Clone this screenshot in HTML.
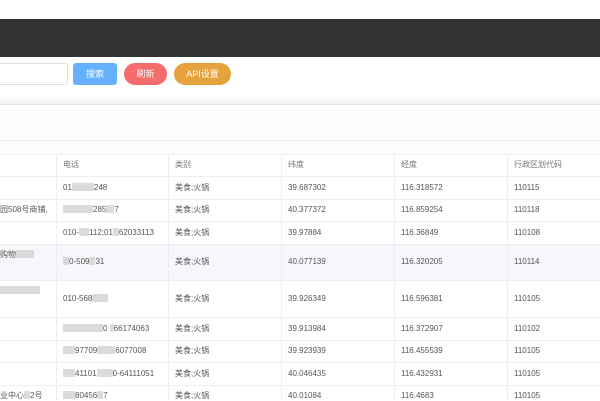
<!DOCTYPE html><html><head><meta charset="utf-8"><style>
body{margin:0;width:600px;height:400px;overflow:hidden;background:#fff;font-family:"Liberation Sans","Noto Sans CJK SC",sans-serif;position:relative}
.a{position:absolute}
.btn{position:absolute;top:63px;height:22px;color:#fff;font-size:9px;line-height:22px;text-align:center}
.t{position:absolute;font-size:8px;line-height:10px;height:10px;color:#555;white-space:nowrap}
.h{color:#777}
.b{display:inline-block;background:#ccc;height:8px;vertical-align:-1px;opacity:.7}
</style></head><body>
<div class="a" style="top:19px;left:0;width:600px;height:38px;background:#323335"></div>
<div class="a" style="top:63px;left:-5px;width:71px;height:20px;border:1px solid #dcdfe6;border-radius:3px"></div>
<div class="btn" style="left:73px;width:44px;background:#66b1ff;border-radius:3px">搜索</div>
<div class="btn" style="left:124px;width:43px;background:#f56c6c;border-radius:11px">刷新</div>
<div class="btn" style="left:174px;width:57px;background:#e6a23c;border-radius:11px">API设置</div>
<div class="a" style="top:95px;left:0;width:600px;height:10px;background:linear-gradient(#fff,#f2f2f4)"></div>
<div class="a" style="top:104px;left:0;width:600px;height:50px;background:#fdfdfd;border-top:1px solid #e4e4e8"></div>
<div class="a" style="top:140px;left:0;width:600px;height:1px;background:#f0f0f2"></div>
<div class="a" style="top:154px;left:0;width:600px;height:1px;background:#ebeef5"></div>
<div class="a" style="top:244px;left:0;width:600px;height:36px;background:#f5f7fa"></div>
<div id="g"></div>
<script>
var rows=[154,176,199,221,244,280,317,340,362,385];
var cols=[56,168,281,394,507];
var h='';
rows.forEach(function(y){h+='<div class="a" style="top:'+y+'px;left:0;width:600px;height:1px;background:#ebeef5"></div>'});
cols.forEach(function(x){h+='<div class="a" style="top:154px;left:'+x+'px;width:1px;height:246px;background:#ebeef5"></div>'});
var hd=['电话','类别','纬度','经度','行政区划代码'];
hd.forEach(function(s,i){h+='<div class="t h" style="top:160px;left:'+(cols[i]+7)+'px">'+s+'</div>'});
var d=[
['01<span class="b" style="width:22px"></span>248','39.687302','116.318572','110115','',0],
['<span class="b" style="width:30px"></span>285<span class="b" style="width:8px"></span>7','40.377372','116.859254','110118','园508号商铺,',0],
['010-<span class="b" style="width:10px"></span>112;01<span class="b" style="width:6px"></span>62033113','39.97884','116.36849','110108','',0],
['<span class="b" style="width:6px"></span>0-509<span class="b" style="width:6px"></span>31','40.077139','116.320205','110114','购物<span class="b" style="width:18px"></span>',1],
['010-568<span class="b" style="width:16px"></span>','39.926349','116.596381','110105','<span class="b" style="width:40px"></span>',1],
['<span class="b" style="width:40px"></span>0 <span class="b" style="width:4px"></span>66174063','39.913984','116.372907','110102','',0],
['<span class="b" style="width:12px"></span>97709<span class="b" style="width:18px"></span>6077008','39.923939','116.455539','110105','',0],
['<span class="b" style="width:12px"></span>41101<span class="b" style="width:16px"></span>0-64111051','40.046435','116.432931','110105','',0],
['<span class="b" style="width:12px"></span>80456<span class="b" style="width:6px"></span>7','40.01084','116.4683','110105','业中心<span class="b" style="width:6px"></span>2号',0]];
d.forEach(function(r,i){
 var y0=rows[i+1],y1=rows[i+2]||407;var y=(y0+y1)/2-5;
 var ty=r[5]?y0+6:y;
 h+='<div class="t" style="top:'+ty+'px;left:0">'+r[4]+'</div>';
 h+='<div class="t" style="top:'+y+'px;left:63px">'+r[0]+'</div>';
 h+='<div class="t" style="top:'+y+'px;left:175px">美食;火锅</div>';
 h+='<div class="t" style="top:'+y+'px;left:288px">'+r[1]+'</div>';
 h+='<div class="t" style="top:'+y+'px;left:401px">'+r[2]+'</div>';
 h+='<div class="t" style="top:'+y+'px;left:514px">'+r[3]+'</div>';
});
document.getElementById('g').innerHTML=h;
</script>
</body></html>
